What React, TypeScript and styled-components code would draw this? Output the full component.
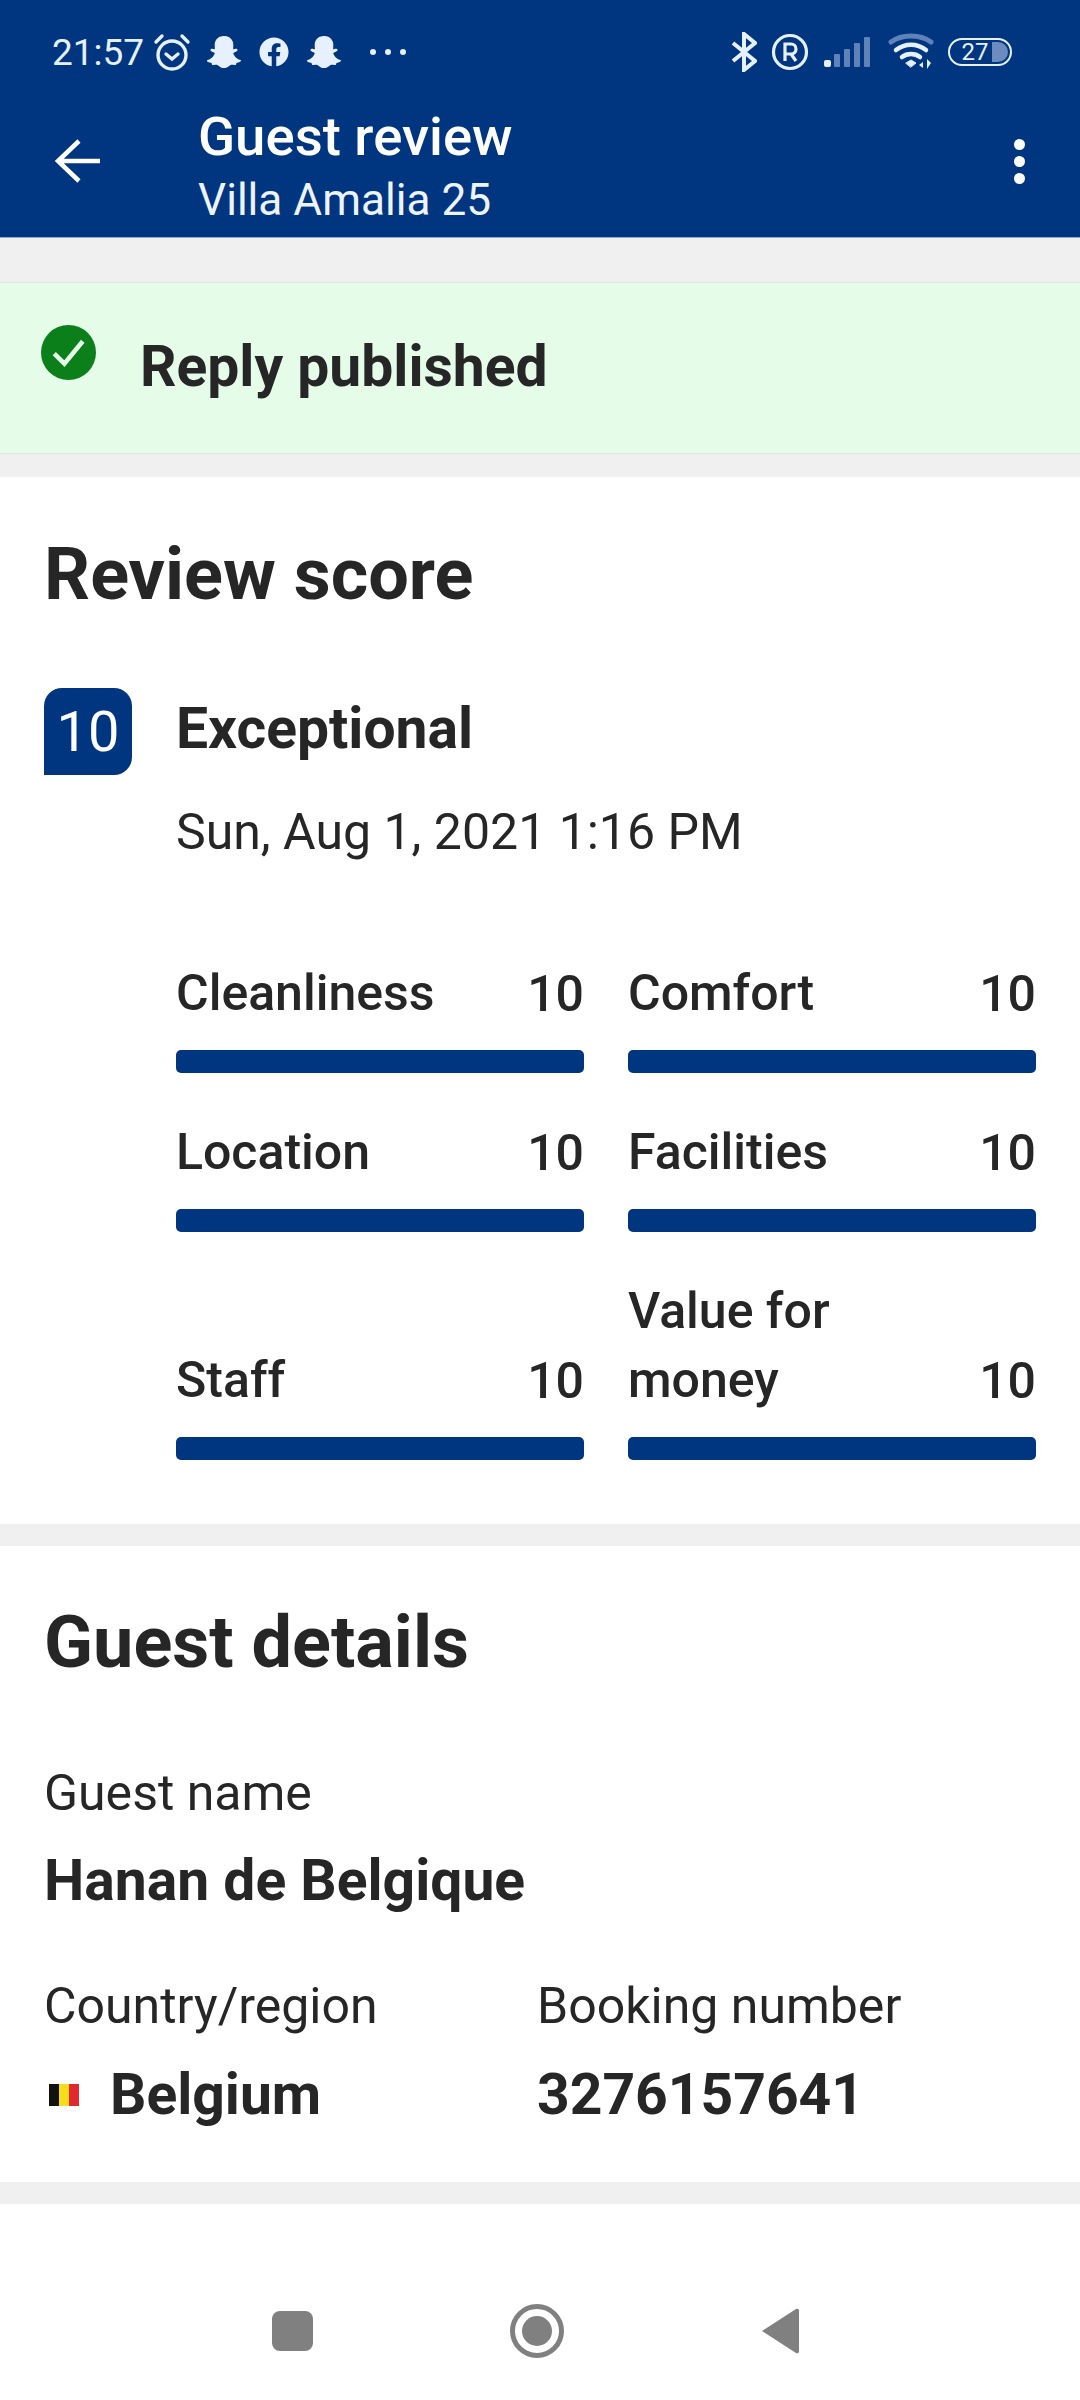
import { createGlobalStyle } from "styled-components";
import styled from "styled-components";
import { FaSnapchatGhost, FaFacebook } from "react-icons/fa";

const scores = [
  { label: "Cleanliness", value: 10 },
  { label: "Comfort", value: 10 },
  { label: "Location", value: 10 },
  { label: "Facilities", value: 10 },
  { label: "Staff", value: 10 },
  { label: "Value for money", value: 10 },
];

export default function App() {
  return (
    <Page>
      <GlobalStyle />
      <Header>
        <StatusBar>
          <StatusLeft>
            <Clock>21:57</Clock>
            <svg width="38" height="38" viewBox="0 0 38 38" fill="none" stroke="#e6f0ff" strokeWidth="3.4" strokeLinecap="round">
              <circle cx="19" cy="22" r="14" />
              <path d="M13 21l6 5 6-5" />
              <path d="M3 9l6-6M35 9l-6-6" />
            </svg>
            <Notif>
              <FaSnapchatGhost size={34} />
            </Notif>
            <Notif>
              <FaFacebook size={30} />
            </Notif>
            <Notif>
              <FaSnapchatGhost size={34} />
            </Notif>
            <Dots>
              <i />
              <i />
              <i />
            </Dots>
          </StatusLeft>
          <StatusRight>
            <svg width="26" height="40" viewBox="0 0 26 40" fill="none" stroke="#e6f0ff" strokeWidth="4">
              <path d="M2 11l22 18-11 9V2l11 9L2 29" />
            </svg>
            <svg width="38" height="38" viewBox="0 0 38 38" fill="none" stroke="#e6f0ff" strokeWidth="3.2">
              <circle cx="19" cy="19" r="16.5" />
              <path d="M14 28V11h6a5 5 0 0 1 0 10h-6M20 21l5 7" />
            </svg>
            <svg width="48" height="32" viewBox="0 0 48 32">
              <rect x="1" y="24" width="7" height="7" rx="2" fill="#e6f0ff" />
              <rect x="11" y="18" width="6" height="13" rx="1" fill="#5f82b8" />
              <rect x="21" y="13" width="6" height="18" rx="1" fill="#5f82b8" />
              <rect x="31" y="7" width="6" height="24" rx="1" fill="#5f82b8" />
              <rect x="41" y="1" width="6" height="30" rx="1" fill="#5f82b8" />
            </svg>
            <WifiIcon width="46" height="38" viewBox="0 0 46 38" fill="none" strokeLinecap="round">
              <path d="M3 9c11-8 29-8 40 0" stroke="#5f82b8" strokeWidth="5" />
              <path d="M8 17c9-7 21-7 30 0" stroke="#e6f0ff" strokeWidth="4.5" />
              <path d="M14 24c5-4 13-4 18 0" stroke="#e6f0ff" strokeWidth="4.5" />
              <path d="M18 30l5-3 5 3-5 4z" fill="#e6f0ff" stroke="#e6f0ff" />
              <path d="M35 29l-4 3 4 3zM39 26v10l4-6z" fill="#e6f0ff" />
            </WifiIcon>
            <Battery>
              <BatteryFill />
              <BatteryText>27</BatteryText>
            </Battery>
          </StatusRight>
        </StatusBar>
        <Toolbar>
          <BackIcon width="46" height="46" viewBox="0 0 46 46" fill="none" stroke="#fff" strokeWidth="4.5">
            <path d="M46 22H4M25 2L4 22l21 20" />
          </BackIcon>
          <Titles>
            <Title>Guest review</Title>
            <Subtitle>Villa Amalia 25</Subtitle>
          </Titles>
          <Kebab>
            <i />
            <i />
            <i />
          </Kebab>
        </Toolbar>
      </Header>

      <Banner>
        <svg width="55" height="55" viewBox="0 0 54 54">
          <circle cx="27" cy="27" r="27" fill="#0b7f1a" />
          <path d="M13 28l10 10 18-22" fill="none" stroke="#e5fce9" strokeWidth="4.5" />
        </svg>
        <BannerText>Reply published</BannerText>
      </Banner>

      <Section>
        <Heading>Review score</Heading>
        <ScoreRow>
          <ScoreBadge>10</ScoreBadge>
          <ScoreInfo>
            <ScoreWord>Exceptional</ScoreWord>
            <ScoreDate>Sun, Aug 1, 2021 1:16 PM</ScoreDate>
          </ScoreInfo>
        </ScoreRow>
        <ScoreGrid>
          {scores.map((s) => (
            <ScoreItem key={s.label}>
              <ScoreHead>
                <ScoreLabel>{s.label}</ScoreLabel>
                <ScoreValue>{s.value}</ScoreValue>
              </ScoreHead>
              <Bar />
            </ScoreItem>
          ))}
        </ScoreGrid>
      </Section>

      <GuestSection>
        <Heading>Guest details</Heading>
        <GuestName>
          <FieldLabel>Guest name</FieldLabel>
          <NameValue>Hanan de Belgique</NameValue>
        </GuestName>
        <FieldRow>
          <Field>
            <FieldLabel>Country/region</FieldLabel>
            <CountryValue>
              <Flag>
                <i />
                <i />
                <i />
              </Flag>
              <FieldValue>Belgium</FieldValue>
            </CountryValue>
          </Field>
          <Field>
            <FieldLabel>Booking number</FieldLabel>
            <CountryValue>
              <FieldValue>3276157641</FieldValue>
            </CountryValue>
          </Field>
        </FieldRow>
      </GuestSection>

      <NavBar>
        <NavSquare />
        <NavHome>
          <i />
        </NavHome>
        <svg width="38" height="46" viewBox="0 0 38 46">
          <path d="M35 1L1 23l34 22a2 2 0 0 0 3-2V3a2 2 0 0 0-3-2z" fill="#808080" />
        </svg>
      </NavBar>
    </Page>
  );
}

const GlobalStyle = createGlobalStyle`
  html, body {
    margin: 0;
    padding: 0;
    background: #fff;
  }
  body {
    font-family: Roboto, "Noto Sans", sans-serif;
    color: #262626;
  }
`;

const Page = styled.div`
  width: 1080px;
  height: 2400px;
  display: flex;
  flex-direction: column;
  background: #f0f0f0;
  overflow: hidden;
`;

const Header = styled.header`
  height: 238px;
  background: #003580;
  border-bottom: 1px solid #8fa8d8;
  box-sizing: border-box;
  color: #fff;
`;

const StatusBar = styled.div`
  height: 104px;
  display: flex;
  justify-content: space-between;
  align-items: center;
  padding: 0 68px 0 52px;
  color: #e6f0ff;
`;

const StatusLeft = styled.div`
  display: flex;
  align-items: center;
  gap: 14px;
`;

const StatusRight = styled.div`
  display: flex;
  align-items: center;
  gap: 14px;
`;

const WifiIcon = styled.svg`
  margin-left: 3px;
`;

const Clock = styled.span`
  font-size: 37px;
  margin-right: -5px;
`;

const Notif = styled.span`
  display: flex;
  width: 34px;
  justify-content: center;
  margin-left: 2px;
`;

const Dots = styled.span`
  display: flex;
  gap: 9px;
  margin-left: 15px;
  & i {
    width: 6px;
    height: 6px;
    border-radius: 50%;
    background: #e6f0ff;
  }
`;

const Battery = styled.span`
  position: relative;
  width: 64px;
  height: 28px;
  box-sizing: border-box;
  border: 2px solid #e6f0ff;
  border-radius: 14px;
  display: flex;
  align-items: center;
  justify-content: center;
  overflow: hidden;
`;

const BatteryFill = styled.span`
  position: absolute;
  right: 2px;
  top: 2px;
  bottom: 2px;
  width: 16px;
  background: #6c8cc0;
  border-radius: 0 10px 10px 0;
`;

const BatteryText = styled.span`
  position: relative;
  font-size: 24px;
  right: 5px;
`;

const Toolbar = styled.div`
  height: 133px;
  display: flex;
  align-items: center;
  padding: 0 0 0 54px;
`;

const BackIcon = styled.svg`
  margin-bottom: 18px;
  flex-shrink: 0;
`;

const Titles = styled.div`
  display: flex;
  flex-direction: column;
  margin-left: 98px;
  margin-top: -4px;
`;

const Title = styled.div`
  font-size: 54.5px;
  font-weight: 500;
  line-height: 60px;
`;

const Subtitle = styled.div`
  font-size: 44.2px;
  line-height: 62px;
  margin-top: 3px;
  color: #eef4ff;
`;

const Kebab = styled.div`
  margin-left: auto;
  margin-right: 31px;
  margin-bottom: 18px;
  width: 60px;
  display: flex;
  flex-direction: column;
  align-items: center;
  gap: 6px;
  & i {
    width: 11px;
    height: 11px;
    border-radius: 50%;
    background: #fff;
  }
`;

const Banner = styled.div`
  margin-top: 44px;
  height: 172px;
  box-sizing: border-box;
  background: #e5fce9;
  border-top: 1px solid #e6e6e6;
  border-bottom: 1px solid #e6e6e6;
  display: flex;
  align-items: flex-start;
  padding: 42px 0 0 41px;
  gap: 44px;
`;

const BannerText = styled.div`
  font-size: 57px;
  font-weight: 700;
  line-height: 70px;
  margin-top: 7px;
`;

const Section = styled.section`
  margin-top: 23px;
  height: 1047px;
  box-sizing: border-box;
  background: #fff;
  padding: 58px 44px 0;
`;

const GuestSection = styled.section`
  margin-top: 22px;
  height: 636px;
  box-sizing: border-box;
  background: #fff;
  padding: 57px 44px 0;
`;

const Heading = styled.h2`
  margin: 0;
  font-size: 72px;
  font-weight: 700;
  line-height: 80px;
`;

const ScoreRow = styled.div`
  display: flex;
  margin-top: 73px;
  gap: 44px;
`;

const ScoreBadge = styled.div`
  width: 88px;
  height: 87px;
  background: #003580;
  color: #fff;
  border-radius: 18px 18px 18px 0;
  display: flex;
  align-items: center;
  justify-content: center;
  font-size: 56px;
`;

const ScoreInfo = styled.div`
  display: flex;
  flex-direction: column;
`;

const ScoreWord = styled.div`
  font-size: 57px;
  font-weight: 700;
  line-height: 70px;
  margin-top: 6px;
`;

const ScoreDate = styled.div`
  font-size: 50px;
  line-height: 60px;
  margin-top: 38px;
`;

const ScoreGrid = styled.div`
  display: grid;
  grid-template-columns: 408px 408px;
  column-gap: 44px;
  row-gap: 45px;
  margin: 97px 0 0 132px;
`;

const ScoreItem = styled.div`
  display: flex;
  flex-direction: column;
  justify-content: flex-end;
`;

const ScoreHead = styled.div`
  display: flex;
  justify-content: space-between;
  align-items: flex-end;
`;

const ScoreLabel = styled.div`
  font-size: 50px;
  font-weight: 500;
  line-height: 69px;
  max-width: 260px;
`;

const ScoreValue = styled.div`
  font-size: 50px;
  font-weight: 500;
  line-height: 68px;
`;

const Bar = styled.div`
  height: 23px;
  margin-top: 22px;
  background: #003580;
  border-radius: 5px;
`;

const GuestName = styled.div`
  margin-top: 80px;
`;

const FieldLabel = styled.div`
  font-size: 50px;
  line-height: 60px;
`;

const FieldValue = styled.div`
  font-size: 57px;
  font-weight: 700;
  line-height: 70px;
`;

const NameValue = styled(FieldValue)`
  margin-top: 23px;
`;

const FieldRow = styled.div`
  display: flex;
  margin-top: 60px;
`;

const Field = styled.div`
  width: 493px;
`;

const CountryValue = styled.div`
  display: flex;
  align-items: center;
  gap: 31px;
  margin-top: 24px;
`;

const Flag = styled.span`
  display: flex;
  width: 30px;
  height: 22px;
  margin-left: 5px;
  & i {
    flex: 1;
  }
  & i:nth-child(1) {
    background: #111;
  }
  & i:nth-child(2) {
    background: #f6dd1c;
  }
  & i:nth-child(3) {
    background: #e0282e;
  }
`;

const NavBar = styled.nav`
  margin-top: 22px;
  flex: 1;
  background: #fff;
  display: flex;
  align-items: center;
  padding: 58px 0 0 272px;
  gap: 197px;
`;

const NavSquare = styled.div`
  width: 41px;
  height: 40px;
  background: #808080;
  border-radius: 8px;
`;

const NavHome = styled.div`
  width: 54px;
  height: 54px;
  border: 5px solid #808080;
  border-radius: 50%;
  box-sizing: border-box;
  display: flex;
  align-items: center;
  justify-content: center;
  & i {
    width: 30px;
    height: 30px;
    border-radius: 50%;
    background: #808080;
  }
`;
